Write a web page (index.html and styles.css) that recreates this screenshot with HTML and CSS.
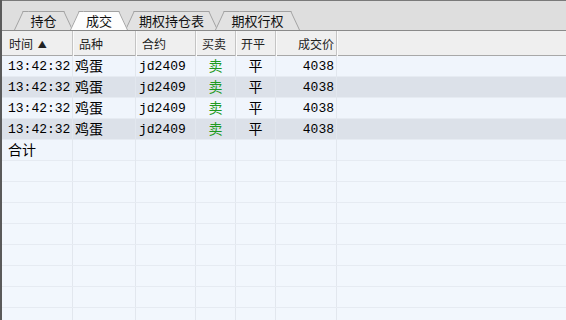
FILE: index.html
```html
<!DOCTYPE html>
<html lang="zh-CN">
<head>
  <meta charset="UTF-8" />
  <title>成交</title>
  <link rel="stylesheet" href="styles.css">
</head>
<body>

  <div class="panel">
    <div class="tabbar">
      <div class="tab tab-pos">持仓</div>
      <div class="tab tab-trade active">成交</div>
      <div class="tab tab-opt">期权持仓表</div>
      <div class="tab tab-exe">期权行权</div>
    </div>

    <div class="grid">
      <div class="row head">
        <div class="cell c1">时间 <span class="sort">▲</span></div>
        <div class="cell c2">品种</div>
        <div class="cell c3">合约</div>
        <div class="cell c4">买卖</div>
        <div class="cell c5">开平</div>
        <div class="cell c6">成交价</div>
        <div class="cell c7"></div>
      </div>

      <div class="row">
        <div class="cell c1">13:42:32</div>
        <div class="cell c2 cn">鸡蛋</div>
        <div class="cell c3">jd2409</div>
        <div class="cell c4 cn sell">卖</div>
        <div class="cell c5 cn">平</div>
        <div class="cell c6">4038</div>
        <div class="cell c7"></div>
      </div>
      <div class="row alt">
        <div class="cell c1">13:42:32</div>
        <div class="cell c2 cn">鸡蛋</div>
        <div class="cell c3">jd2409</div>
        <div class="cell c4 cn sell">卖</div>
        <div class="cell c5 cn">平</div>
        <div class="cell c6">4038</div>
        <div class="cell c7"></div>
      </div>
      <div class="row">
        <div class="cell c1">13:42:32</div>
        <div class="cell c2 cn">鸡蛋</div>
        <div class="cell c3">jd2409</div>
        <div class="cell c4 cn sell">卖</div>
        <div class="cell c5 cn">平</div>
        <div class="cell c6">4038</div>
        <div class="cell c7"></div>
      </div>
      <div class="row alt">
        <div class="cell c1">13:42:32</div>
        <div class="cell c2 cn">鸡蛋</div>
        <div class="cell c3">jd2409</div>
        <div class="cell c4 cn sell">卖</div>
        <div class="cell c5 cn">平</div>
        <div class="cell c6">4038</div>
        <div class="cell c7"></div>
      </div>
      <div class="row">
        <div class="cell c1 cn">合计</div>
        <div class="cell c2"></div>
        <div class="cell c3"></div>
        <div class="cell c4"></div>
        <div class="cell c5"></div>
        <div class="cell c6"></div>
        <div class="cell c7"></div>
      </div>

      <!-- empty rows -->
      <div class="row empty"><div class="cell"></div><div class="cell"></div><div class="cell"></div><div class="cell"></div><div class="cell"></div><div class="cell"></div><div class="cell"></div></div>
      <div class="row empty"><div class="cell"></div><div class="cell"></div><div class="cell"></div><div class="cell"></div><div class="cell"></div><div class="cell"></div><div class="cell"></div></div>
      <div class="row empty"><div class="cell"></div><div class="cell"></div><div class="cell"></div><div class="cell"></div><div class="cell"></div><div class="cell"></div><div class="cell"></div></div>
      <div class="row empty"><div class="cell"></div><div class="cell"></div><div class="cell"></div><div class="cell"></div><div class="cell"></div><div class="cell"></div><div class="cell"></div></div>
      <div class="row empty"><div class="cell"></div><div class="cell"></div><div class="cell"></div><div class="cell"></div><div class="cell"></div><div class="cell"></div><div class="cell"></div></div>
      <div class="row empty"><div class="cell"></div><div class="cell"></div><div class="cell"></div><div class="cell"></div><div class="cell"></div><div class="cell"></div><div class="cell"></div></div>
      <div class="row empty"><div class="cell"></div><div class="cell"></div><div class="cell"></div><div class="cell"></div><div class="cell"></div><div class="cell"></div><div class="cell"></div></div>
      <div class="row empty"><div class="cell"></div><div class="cell"></div><div class="cell"></div><div class="cell"></div><div class="cell"></div><div class="cell"></div><div class="cell"></div></div>
    </div>
  </div>

</body>
</html>
```

FILE: styles.css
```css
html, body {
  margin: 0;
  padding: 0;
  background: #f2f7fd;
}

.panel {
  width: 566px;
  height: 320px;
  overflow: hidden;
  box-sizing: border-box;
  border-left: 2px solid #5a5a5a;
  font-family: "Noto Sans CJK SC", sans-serif;
  background: #f2f7fd;
}

/* tab strip */
.tabbar {
  display: flex;
  align-items: flex-end;
  height: 29px;
  padding-left: 12px;
  background: #dedede;
  border-top: 1px solid #7a7a7a;
  box-sizing: content-box;
}

.tab {
  position: relative;
  z-index: 1;
  height: 19px;
  line-height: 19px;
  font-size: 13px;
  color: #111;
  text-align: center;
  margin-right: -3px;
}

.tab::before,
.tab::after {
  content: "";
  position: absolute;
  top: 0;
  bottom: 0;
  width: 60%;
  z-index: -1;
  background: #e2e2e2;
  border-top: 1px solid #a2a2a2;
}

.tab::before {
  left: 0;
  border-left: 1px solid #a2a2a2;
  transform: skewX(-25deg);
  transform-origin: bottom left;
}

.tab::after {
  right: 0;
  border-right: 1px solid #a2a2a2;
  transform: skewX(25deg);
  transform-origin: bottom right;
}

.tab.active {
  z-index: 2;
}

.tab.active::before,
.tab.active::after {
  background: #fdfdfd;
}

.tab-pos { width: 59px; }
.tab-trade { width: 58px; }
.tab-opt { width: 93px; }
.tab-exe { width: 85px; }

/* grid */
.grid {
  border-top: 1px solid #8a8a8a;
}

.row {
  display: grid;
  grid-template-columns: 71px 63px 60px 40px 40px 61px 1fr;
  height: 21px;
  box-sizing: border-box;
  border-bottom: 1px solid #e6ebf2;
  background: #f0f5fc;
  font-family: "Liberation Mono", "Noto Sans CJK SC", monospace;
  font-size: 13px;
  line-height: 22px;
  color: #000;
}

.row.alt {
  background: #dce1e9;
}

.row.empty {
  background: #f2f7fd;
}

.cell {
  border-right: 1px solid #e2e7ee;
  white-space: nowrap;
}

.cn {
  font-size: 14px;
}

.row .c7,
.row.empty .cell:last-child {
  border-right: none;
}

.c1 { padding-left: 6px; }
.c2 { padding-left: 2px; }
.c3 { padding-left: 3px; }
.c4, .c5 { text-align: center; }
.c6 { text-align: right; padding-right: 2px; }

.sell {
  color: #1f9a1f;
}

/* header */
.row.head {
  height: 25px;
  line-height: 25px;
  background: #efefef;
  border-bottom: 1px solid #a8a8a8;
  font-family: "Noto Sans CJK SC", sans-serif;
  font-size: 12px;
  color: #222;
}

.head .cell {
  border-right: 1px solid #c4c4c4;
  box-shadow: 1px 0 0 #fbfbfb;
}

.head .c7 {
  border-right: none;
  box-shadow: none;
}

.head .c1 { padding-left: 7px; }
.head .c2 { padding-left: 6px; }
.head .c3 { padding-left: 6px; }
.head .c4 { text-align: left; padding-left: 6px; }
.head .c5 { text-align: left; padding-left: 5px; }
.head .c6 { padding-right: 2px; }

.sort {
  font-size: 9px;
  vertical-align: 1px;
  margin-left: 2px;
}
```
